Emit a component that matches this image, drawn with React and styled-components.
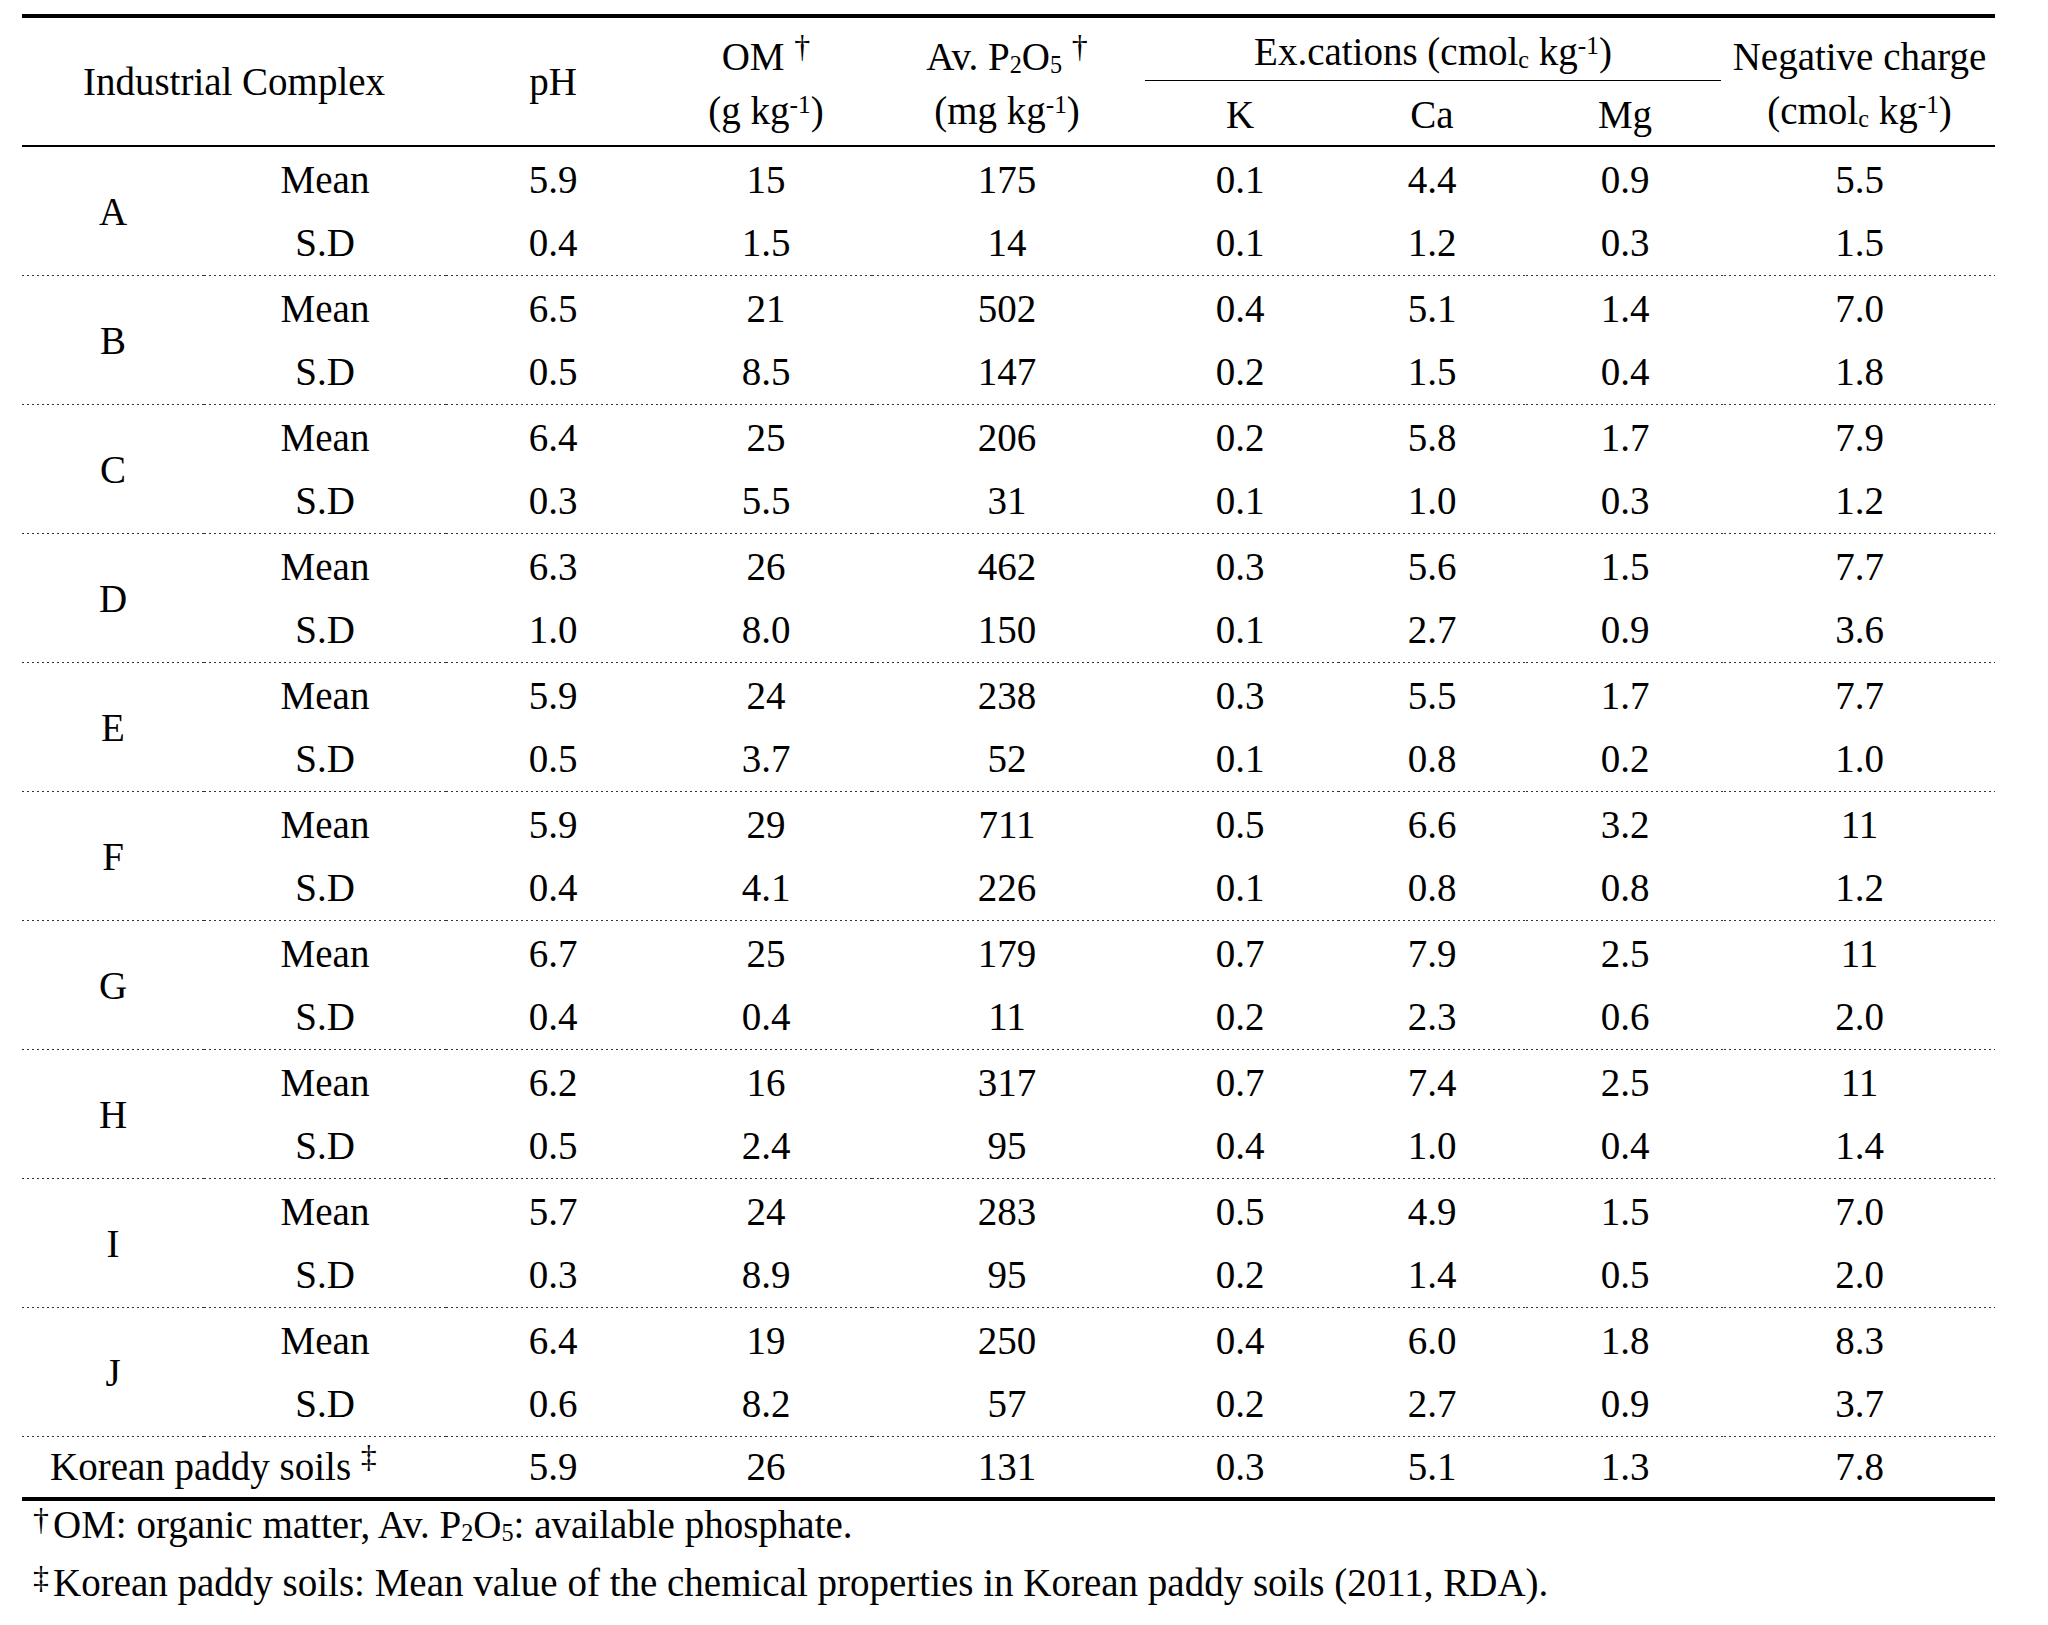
import React from 'react';
import styled, {createGlobalStyle} from 'styled-components';

const GlobalStyle = createGlobalStyle`
  html, body {
    margin: 0;
    padding: 0;
    background: #fff;
  }
`;

const COL_WIDTHS = [182, 242, 214, 212, 270, 196, 188, 198, 271];

const GROUPS = [
  ['A', ['5.9', '15', '175', '0.1', '4.4', '0.9', '5.5'], ['0.4', '1.5', '14', '0.1', '1.2', '0.3', '1.5']],
  ['B', ['6.5', '21', '502', '0.4', '5.1', '1.4', '7.0'], ['0.5', '8.5', '147', '0.2', '1.5', '0.4', '1.8']],
  ['C', ['6.4', '25', '206', '0.2', '5.8', '1.7', '7.9'], ['0.3', '5.5', '31', '0.1', '1.0', '0.3', '1.2']],
  ['D', ['6.3', '26', '462', '0.3', '5.6', '1.5', '7.7'], ['1.0', '8.0', '150', '0.1', '2.7', '0.9', '3.6']],
  ['E', ['5.9', '24', '238', '0.3', '5.5', '1.7', '7.7'], ['0.5', '3.7', '52', '0.1', '0.8', '0.2', '1.0']],
  ['F', ['5.9', '29', '711', '0.5', '6.6', '3.2', '11'], ['0.4', '4.1', '226', '0.1', '0.8', '0.8', '1.2']],
  ['G', ['6.7', '25', '179', '0.7', '7.9', '2.5', '11'], ['0.4', '0.4', '11', '0.2', '2.3', '0.6', '2.0']],
  ['H', ['6.2', '16', '317', '0.7', '7.4', '2.5', '11'], ['0.5', '2.4', '95', '0.4', '1.0', '0.4', '1.4']],
  ['I', ['5.7', '24', '283', '0.5', '4.9', '1.5', '7.0'], ['0.3', '8.9', '95', '0.2', '1.4', '0.5', '2.0']],
  ['J', ['6.4', '19', '250', '0.4', '6.0', '1.8', '8.3'], ['0.6', '8.2', '57', '0.2', '2.7', '0.9', '3.7']],
];

const KOREAN = ['5.9', '26', '131', '0.3', '5.1', '1.3', '7.8'];

const Page = styled.div`
  padding: 14px 0 0 22px;
  font-family: 'Liberation Serif', 'Times New Roman', serif;
  font-size: 39px;
  color: #000;
`;

const Table = styled.table`
  width: 1973px;
  table-layout: fixed;
  border-collapse: separate;
  border-spacing: 0;
  border-top: 4px solid #000;
  border-bottom: 4px solid #000;
  font: inherit;
`;

const Col = styled.col`
  width: ${p => p.$w}px;
`;

const HeadCell = styled.th`
  font-weight: 400;
  text-align: center;
  vertical-align: middle;
  padding: ${p => p.$top || 0}px 0 0;
  line-height: ${p => p.$lh || 46}px;
  border-bottom: ${p => (p.$rule ? '2px solid #000' : 'none')};
  white-space: nowrap;
`;

const GroupHead = styled.th`
  font-weight: 400;
  vertical-align: bottom;
  padding: 0 3px;
  height: 63px;
`;

const GroupLabel = styled.div`
  border-bottom: 1px solid #000;
  line-height: 46px;
  padding-bottom: 5px;
  white-space: nowrap;
`;

const Line = styled.div`
  white-space: nowrap;
`;

// superscript: exponents and footnote marks
const Sup = styled.span`
  font-size: ${p => p.$size || '0.65em'};
  vertical-align: ${p => p.$raise || '0.45em'};
  margin-right: ${p => p.$gap || 0}px;
  line-height: 0;
`;

const Sub = styled.span`
  font-size: 0.62em;
  vertical-align: -0.12em;
  line-height: 0;
`;

const dotted = `
  background-image: linear-gradient(to right, #333 0 2px, transparent 2px);
  background-size: 5px 1px;
  background-repeat: repeat-x;
  background-position: left bottom;
`;

const Cell = styled.td`
  text-align: center;
  vertical-align: middle;
  line-height: 56px;
  padding: ${p => (p.$last ? '4px 0 5px' : '5px 0 3px')};
  white-space: nowrap;
  ${p => (p.$last ? dotted : '')}
`;

const LetterCell = styled.td`
  text-align: center;
  vertical-align: middle;
  padding: 0;
  line-height: 56px;
  ${dotted}
`;

const RefCell = styled.td`
  text-align: ${p => (p.$left ? 'left' : 'center')};
  padding: 0 0 0 ${p => (p.$left ? 28 : 0)}px;
  line-height: 60px;
  white-space: nowrap;
`;

const Notes = styled.div`
  margin-top: -5px;
  padding: 0 0 0 11px;
  line-height: 58px;
`;

const Note = styled.div`
  white-space: nowrap;
`;

// dagger marks: large and lifted, as in the printed table
const Dagger = ({children, lift = '0.42em', gap = 0}) => (
  <Sup $size="0.82em" $raise={lift} $gap={gap}>
    {children}
  </Sup>
);

function GroupRows({group}) {
  const [label, mean, sd] = group;
  return (
    <>
      <tr>
        <LetterCell rowSpan={2}>{label}</LetterCell>
        <Cell>Mean</Cell>
        {mean.map((v, i) => (
          <Cell key={i}>{v}</Cell>
        ))}
      </tr>
      <tr>
        <Cell $last>S.D</Cell>
        {sd.map((v, i) => (
          <Cell $last key={i}>
            {v}
          </Cell>
        ))}
      </tr>
    </>
  );
}

export default function App() {
  return (
    <Page>
      <GlobalStyle />
      <Table>
        <colgroup>
          {COL_WIDTHS.map((w, i) => (
            <Col key={i} $w={w} />
          ))}
        </colgroup>
        <thead>
          <tr>
            <HeadCell colSpan={2} rowSpan={2} $rule $top={1}>
              Industrial Complex
            </HeadCell>
            <HeadCell rowSpan={2} $rule $top={1}>
              pH
            </HeadCell>
            <HeadCell rowSpan={2} $rule $top={5} $lh={54}>
              <Line>
                OM <Dagger>†</Dagger>
              </Line>
              <Line>
                (g kg<Sup>-1</Sup>)
              </Line>
            </HeadCell>
            <HeadCell rowSpan={2} $rule $top={5} $lh={54}>
              <Line>
                Av. P<Sub>2</Sub>O<Sub>5</Sub> <Dagger>†</Dagger>
              </Line>
              <Line>
                (mg kg<Sup>-1</Sup>)
              </Line>
            </HeadCell>
            <GroupHead colSpan={3}>
              <GroupLabel>
                Ex.cations (cmol<Sub>c</Sub> kg<Sup>-1</Sup>)
              </GroupLabel>
            </GroupHead>
            <HeadCell rowSpan={2} $rule $top={5} $lh={54}>
              <Line>Negative charge</Line>
              <Line>
                (cmol<Sub>c</Sub> kg<Sup>-1</Sup>)
              </Line>
            </HeadCell>
          </tr>
          <tr>
            <HeadCell $rule $top={4} $lh={60}>
              K
            </HeadCell>
            <HeadCell $rule $top={4} $lh={60}>
              Ca
            </HeadCell>
            <HeadCell $rule $top={4} $lh={60}>
              Mg
            </HeadCell>
          </tr>
        </thead>
        <tbody>
          {GROUPS.map(g => (
            <GroupRows key={g[0]} group={g} />
          ))}
          <tr>
            <RefCell colSpan={2} $left>
              Korean paddy soils <Dagger>‡</Dagger>
            </RefCell>
            {KOREAN.map((v, i) => (
              <RefCell key={i}>{v}</RefCell>
            ))}
          </tr>
        </tbody>
      </Table>
      <Notes>
        <Note>
          <Dagger lift="0.25em" gap={4}>
            †
          </Dagger>
          OM: organic matter, Av. P<Sub>2</Sub>O<Sub>5</Sub>: available phosphate.
        </Note>
        <Note>
          <Dagger lift="0.25em" gap={4}>
            ‡
          </Dagger>
          Korean paddy soils: Mean value of the chemical properties in Korean paddy soils (2011, RDA).
        </Note>
      </Notes>
    </Page>
  );
}
